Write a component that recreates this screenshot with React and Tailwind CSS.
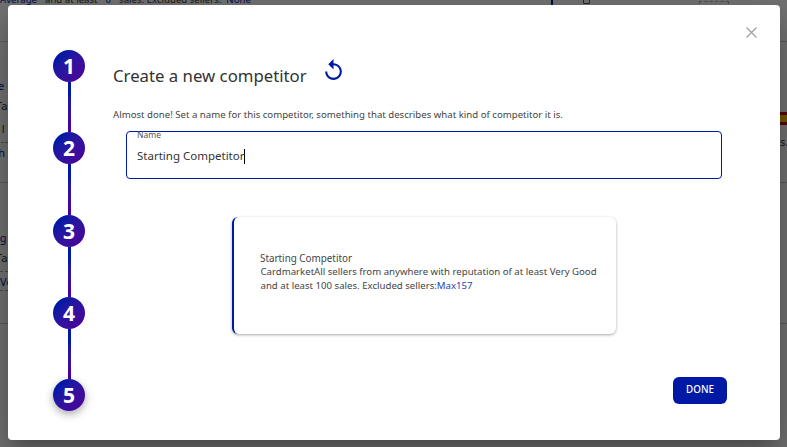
const font = { fontFamily: '"Noto Sans", sans-serif' };

function Step({ n, shadow }) {
  return (
    <div className={`flex h-8 w-8 shrink-0 items-center justify-center rounded-full bg-gradient-to-br from-[#0019a5] from-20% to-[#4a0099] to-90% pt-[1px] text-[21px] font-bold leading-none text-white ${shadow ? "shadow-[0_3px_8px_rgba(0,0,0,0.35)]" : ""}`}>
      {n}
    </div>
  );
}

function Connector({ tall }) {
  return <div className={`${tall ? "h-[51px]" : "h-[50px]"} w-[3px] shrink-0 bg-gradient-to-b from-[#0019a5] from-25% to-[#4a0099] to-90%`} />;
}

function Line({ className = "", children }) {
  return <div className={`h-[20px] whitespace-nowrap text-[11px] leading-[20px] ${className}`}>{children}</div>;
}

export default function App() {
  return (
    <div style={font} className="relative h-[447px] w-[787px] overflow-hidden bg-white">
      {/* page behind the dialog */}
      <div className="h-[447px] text-[#333]">
        <div className="-mt-[9px] flex h-[51px] items-start border-b border-[#ccc]">
          <div className="w-[551px] whitespace-nowrap pt-[1px] text-[9.65px] leading-[16px]">
            <span className="text-[#0019a5]">Average</span>
            <span className="ml-[8px]">and at least</span>
            <span className="ml-[8px] text-[#0019a5]">0</span>
            <span className="ml-[8px]">sales. Excluded sellers:</span>
            <span className="ml-[5px] text-[#0019a5]">None</span>
          </div>
          <div className="h-[15px] w-[2px] bg-[#0019a5]" />
          <div className="ml-[30px] mt-[4px] h-[9px] w-[7px] rounded-[1px] border border-[#555]" />
          <div className="ml-[109px] mt-[10px] h-[12px] w-[30px] border border-dashed border-[#aaa]" />
        </div>
        <div className="flex h-[141px] justify-between border-b border-[#ccc] pt-[34px]">
          <div className="w-[8px] overflow-hidden">
            <Line className="-ml-[8px] text-[#0019a5]">Se</Line>
            <Line className="-ml-[4px]">Tar</Line>
            <Line className="mt-[3px] -ml-[5px]">t l</Line>
            <Line className="mt-[3px] -ml-[7px] border-t border-dashed border-[#aaa] text-[#0019a5]">ch</Line>
          </div>
          <div className="w-[7px] overflow-hidden pt-[36px]">
            <div className="h-[13px] w-[7px] bg-[linear-gradient(#c60b1e_25%,#ffc400_25%,#ffc400_75%,#c60b1e_75%)]" />
            <Line className="mt-[7px]">s.</Line>
          </div>
        </div>
        <div className="h-[141px] border-b border-[#ccc] pt-[45px]">
          <div className="w-[8px] overflow-hidden">
            <Line className="-ml-[7px] text-[#0019a5]">ng</Line>
            <Line className="-ml-[4px]">Tar</Line>
            <Line className="mt-[3px] border-y border-dashed border-[#aaa] text-[#0019a5]">Ve</Line>
          </div>
        </div>
      </div>
      <div className="absolute inset-0 bg-black/55" />

      {/* dialog */}
      <div className="absolute left-[8px] top-[5px] flex h-[435px] w-[772px] rounded-[4px] bg-white pl-[45px] pr-[53px] pt-[45px] shadow-[0_11px_15px_-7px_rgba(0,0,0,0.2),0_24px_38px_3px_rgba(0,0,0,0.14),0_9px_46px_8px_rgba(0,0,0,0.12)]">
        <svg className="absolute right-[23px] top-[22px] h-[11px] w-[11px]" viewBox="0 0 11 11" fill="none" stroke="#9e9e9e" strokeWidth="1.2">
          <path d="M0.5 0.5L10.5 10.5M10.5 0.5L0.5 10.5" />
        </svg>

        <div className="flex w-8 shrink-0 flex-col items-center">
          <Step n="1" />
          <Connector />
          <Step n="2" />
          <Connector tall />
          <Step n="3" />
          <Connector />
          <Step n="4" />
          <Connector />
          <Step n="5" shadow />
        </div>

        <div className="ml-[28px] flex min-w-0 flex-1 flex-col pt-[11px]">
          <div className="flex h-[30px] items-center text-[#333]">
            <h1 className="text-[16.75px] font-normal leading-[24px]">Create a new competitor</h1>
            <svg className="-mt-[11px] ml-[14px] h-[25px] w-[25px]" viewBox="0 0 24 24" fill="#0019a5">
              <path d="M12 5V1L7 6l5 5V7c3.31 0 6 2.69 6 6s-2.69 6-6 6-6-2.69-6-6H4c0 4.42 3.58 8 8 8s8-3.58 8-8-3.58-8-8-8z" />
            </svg>
          </div>
          <p className="mt-[16px] whitespace-nowrap text-[9.65px] leading-[16px] text-[#444]">
            Almost done! Set a name for this competitor, something that describes what kind of competitor it is.
          </p>

          <div className="mt-[8px] flex flex-1 flex-col pl-[13px] pr-[5px]">
            <div className="relative flex h-[48px] items-center rounded-[4px] border-[1.5px] border-[#0019a5] pl-[10px] text-[11.5px] text-[#333]">
              <span className="absolute left-[10px] top-[-3px] text-[8.5px] leading-[12px] text-[#555]">Name</span>
              <span className="mt-[2px]">Starting Competitor</span>
              <span className="mt-[2px] inline-block h-[15px] w-px bg-black" />
            </div>

            <div className="ml-[106px] mt-[38px] h-[117px] w-[384px] rounded-[6px] border-l-2 border-[#0019a5] bg-white pl-[26px] pr-[16px] pt-[34px] leading-[14px] text-[#444] shadow-[0_1px_3px_rgba(0,0,0,0.35)]">
              <div className="text-[9.85px]">Starting Competitor</div>
              <div className="pl-[0.5px] text-[9.65px]">
                CardmarketAll sellers from anywhere with reputation of at least Very Good and at least 100 sales. Excluded sellers:
                <span className="text-[#2b3fb5]">Max157</span>
              </div>
            </div>
          </div>

          <button className="mb-[36px] ml-auto h-[27px] w-[54px] rounded-[6px] bg-[#0019a5] text-[9.8px] font-medium text-white">
            DONE
          </button>
        </div>
      </div>
    </div>
  );
}
